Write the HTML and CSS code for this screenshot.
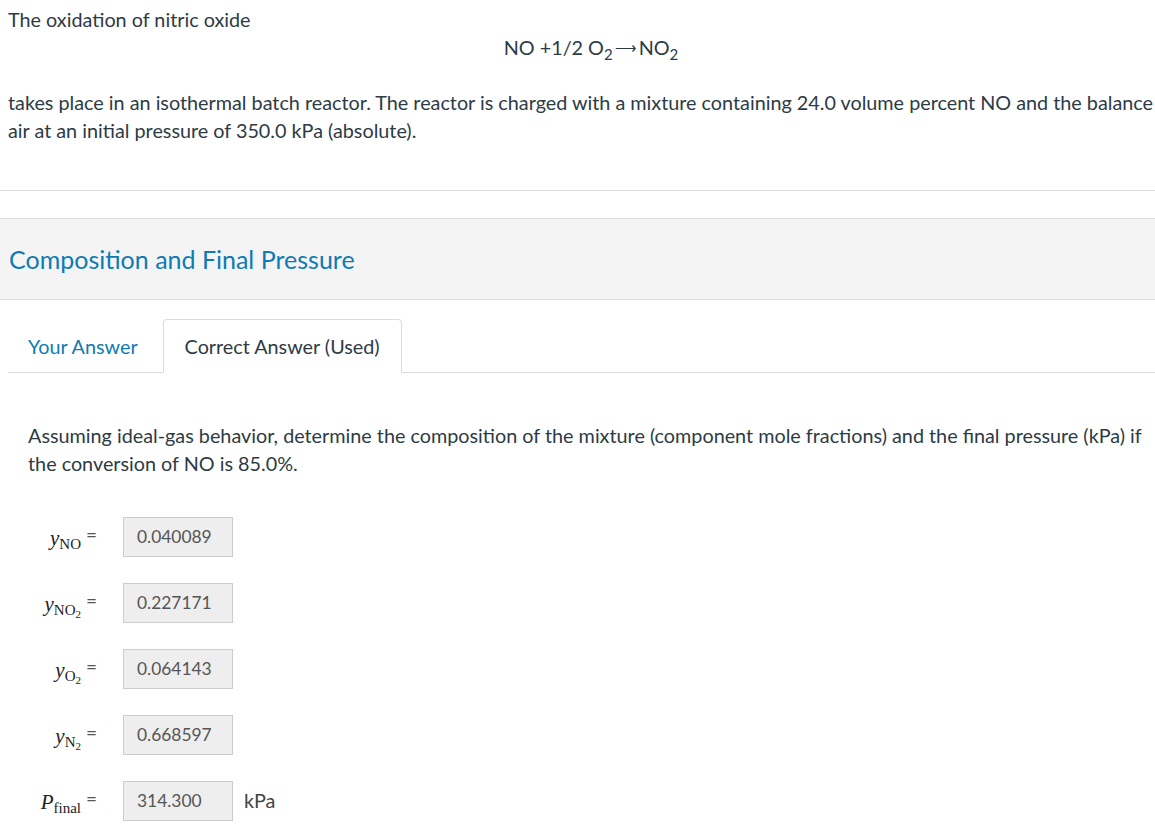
FILE: index.html
```html
<!DOCTYPE html>
<html>
<head>
<meta charset="utf-8">
<link rel="stylesheet" href="styles.css">
</head>
<body>
<div class="intro">
  <p class="lead">The oxidation of nitric oxide</p>
  <div class="equation">NO +1/2 O<sub>2</sub><span class="arrow">⟶</span>NO<sub>2</sub></div>
  <p class="para">takes place in an isothermal batch reactor. The reactor is charged with a mixture containing 24.0 volume percent NO and the balance air at an initial pressure of 350.0 kPa (absolute).</p>
</div>
<hr class="divider">
<div class="band">
  <h2 class="band-title">Composition and Final Pressure</h2>
</div>
<div class="tabs">
  <div class="tab">Your Answer</div>
  <div class="tab active">Correct Answer (Used)</div>
</div>
<div class="question">
  <p class="qtext">Assuming ideal-gas behavior, determine the composition of the mixture (component mole fractions) and the final pressure (kPa) if the conversion of NO is 85.0%.</p>
  <div class="answers">
    <div class="row">
      <div class="label"><span class="var">y</span><span class="sub">NO</span><span class="eq">=</span></div>
      <div class="box">0.040089</div>
    </div>
    <div class="row">
      <div class="label"><span class="var">y</span><span class="sub">NO<span class="subsub">2</span></span><span class="eq">=</span></div>
      <div class="box">0.227171</div>
    </div>
    <div class="row">
      <div class="label"><span class="var">y</span><span class="sub">O<span class="subsub">2</span></span><span class="eq">=</span></div>
      <div class="box">0.064143</div>
    </div>
    <div class="row">
      <div class="label"><span class="var">y</span><span class="sub">N<span class="subsub">2</span></span><span class="eq">=</span></div>
      <div class="box">0.668597</div>
    </div>
    <div class="row">
      <div class="label"><span class="var">P</span><span class="sub">final</span><span class="eq">=</span></div>
      <div class="box">314.300</div>
      <div class="unit">kPa</div>
    </div>
  </div>
</div>
</body>
</html>
```

FILE: styles.css
```css
html, body {
  margin: 0;
  padding: 0;
  background: #fff;
}
body {
  font-family: Lato, "Noto Sans", sans-serif;
  font-size: 19.8px;
  line-height: 28px;
  color: #2d3b45;
  width: 1155px;
}
p { margin: 0; }
.intro {
  padding: 5px 0 0 8px;
}
.equation {
  text-align: center;
  padding-left: 19px;
  line-height: 28px;
}
.equation sub {
  font-size: 15px;
  vertical-align: -5px;
  line-height: 0;
}
.arrow {
  font-size: 15px;
  margin: 0 2px;
  position: relative;
  top: -2px;
}
.para {
  margin-top: 25px;
}
.divider {
  border: 0;
  border-top: 1px solid #dcdcdc;
  margin: 46px 0 0 0;
  height: 0;
}
.band {
  margin-top: 27px;
  background: #f4f4f4;
  border-top: 1px solid #dcdcdc;
  border-bottom: 1px solid #dcdcdc;
  height: 80px;
  display: flex;
  align-items: center;
  padding-left: 9px;
}
.band-title {
  margin: 0;
  font-weight: normal;
  font-size: 25px;
  color: #0e7bb3;
  line-height: 30px;
  padding-bottom: 1px;
}
.tabs {
  margin: 19px 0 0 8px;
  display: flex;
  border-bottom: 1px solid #dcdcdc;
  height: 53px;
}
.tab {
  padding: 0 20px;
  display: flex;
  align-items: center;
  height: 53px;
  box-sizing: border-box;
  color: #0e7bb3;
}
.tab.active {
  color: #2d3b45;
  border: 1px solid #dcdcdc;
  border-bottom: 1px solid #fff;
  border-radius: 4px 4px 0 0;
  background: #fff;
  height: 54px;
  margin-left: 5px;
  padding: 0 21px;
}
.question {
  padding: 48px 0 0 28px;
}
.qtext {
  padding-right: 10px;
}
.answers {
  margin-top: 40px;
  display: flex;
  flex-direction: column;
  gap: 26px;
}
.row {
  display: flex;
  align-items: center;
  height: 40px;
}
.label {
  width: 69px;
  text-align: right;
  font-family: "Liberation Serif", "Times New Roman", serif;
  color: #222;
  white-space: nowrap;
  display: flex;
  justify-content: flex-end;
  align-items: baseline;
  padding-top: 4px;
}
.var {
  font-style: italic;
  font-size: 21px;
}
.sub {
  font-size: 15px;
  position: relative;
  top: 4px;
}
.subsub {
  font-size: 11px;
  position: relative;
  top: 3px;
}
.eq {
  font-family: Lato, sans-serif;
  font-size: 19px;
  color: #555;
  margin-left: 5px;
  position: relative;
  top: -3px;
}
.box {
  margin-left: 26px;
  width: 110px;
  height: 40px;
  box-sizing: border-box;
  background: #eeeeee;
  border: 1px solid #cccccc;
  font-size: 17.4px;
  color: #555;
  display: flex;
  align-items: center;
  padding-left: 13px;
}
.unit {
  margin-left: 11px;
  font-size: 19.8px;
  color: #444;
  margin-top: -3px;
}
```
